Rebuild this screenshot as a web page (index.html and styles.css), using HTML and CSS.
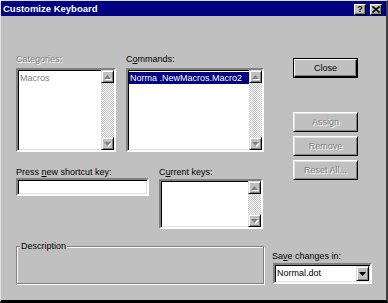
FILE: index.html
```html
<!DOCTYPE html>
<html lang="en">
<head>
    <meta charset="UTF-8">
    <title>Customize Keyboard</title>
    <link rel="stylesheet" href="styles.css">
</head>
<body>
    <div class="window">
        <div class="titlebar">
            <span class="title">Customize Keyboard</span>
            <div class="title-btns">
                <span class="tbtn tbtn-help">?</span>
                <span class="tbtn"><svg width="8" height="7" viewBox="0 0 8 7"><path d="M0.5 0.5 L7.5 6.5 M7.5 0.5 L0.5 6.5" stroke="#000" stroke-width="1.6"/></svg></span>
            </div>
        </div>
        <div class="body">
            <div class="top">
                <div class="fields">
                    <div class="row row-lists">
                        <div class="field f-cat">
                            <div class="label disabled">Categories:</div>
                            <div class="listbox lb-cat">
                                <div class="items"><div class="item disabled">Macros</div></div>
                                <div class="vscroll">
                                    <span class="arrow"><svg width="7" height="4" viewBox="0 0 7 4"><polygon points="3.5,0 7,4 0,4" fill="#808080"/></svg></span>
                                    <span class="track"></span>
                                    <span class="arrow"><svg width="7" height="4" viewBox="0 0 7 4"><polygon points="0,0 7,0 3.5,4" fill="#808080"/></svg></span>
                                </div>
                            </div>
                        </div>
                        <div class="field f-cmd">
                            <div class="label">C<u>o</u>mmands:</div>
                            <div class="listbox lb-cmd">
                                <div class="items"><div class="item selected">Norma .NewMacros.Macro2</div></div>
                                <div class="vscroll">
                                    <span class="arrow"><svg width="7" height="4" viewBox="0 0 7 4"><polygon points="3.5,0 7,4 0,4" fill="#808080"/></svg></span>
                                    <span class="track"></span>
                                    <span class="arrow"><svg width="7" height="4" viewBox="0 0 7 4"><polygon points="0,0 7,0 3.5,4" fill="#808080"/></svg></span>
                                </div>
                            </div>
                        </div>
                    </div>
                    <div class="row row-keys">
                        <div class="field f-short">
                            <div class="label">Press <u>n</u>ew shortcut key:</div>
                            <div class="textbox"></div>
                        </div>
                        <div class="field f-cur">
                            <div class="label">C<u>u</u>rrent keys:</div>
                            <div class="listbox lb-cur">
                                <div class="items"></div>
                                <div class="vscroll">
                                    <span class="arrow"><svg width="7" height="4" viewBox="0 0 7 4"><polygon points="3.5,0 7,4 0,4" fill="#808080"/></svg></span>
                                    <span class="track"></span>
                                    <span class="arrow"><svg width="7" height="4" viewBox="0 0 7 4"><polygon points="0,0 7,0 3.5,4" fill="#808080"/></svg></span>
                                </div>
                            </div>
                        </div>
                    </div>
                </div>
                <div class="buttons">
                    <div class="btn btn-default"><span>Close</span></div>
                    <div class="btn btn-assign disabled">Assi<u>g</u>n</div>
                    <div class="btn disabled">Remove</div>
                    <div class="btn disabled">Reset All...</div>
                </div>
            </div>
            <div class="bottom">
                <div class="groupbox"><span class="legend">Description</span></div>
                <div class="save">
                    <div class="label">Sa<u>v</u>e changes in:</div>
                    <div class="combo">
                        <span class="combo-text">Normal.dot</span>
                        <span class="combo-btn"><svg width="7" height="4" viewBox="0 0 7 4"><polygon points="0,0 7,0 3.5,4" fill="#000"/></svg></span>
                    </div>
                </div>
            </div>
        </div>
    </div>
</body>
</html>
```

FILE: styles.css
```css
/* Win95 style dialog */
* {
    box-sizing: border-box;
}
body {
    margin: 0;
    font-family: "Liberation Sans", Arial, sans-serif;
    font-size: 9px;
    background: #fff;
}
.window {
    width: 388px;
    height: 303px;
    background: #c0c0c0;
    border-top: 1px solid #dfdfdf;
    border-left: 1px solid #dfdfdf;
    border-right: 2px solid #404040;
    border-bottom: 3px solid #000;
    display: flex;
    flex-direction: column;
}
.titlebar {
    height: 15px;
    background: #000080;
    color: #fff;
    display: flex;
    align-items: center;
    justify-content: space-between;
    padding: 0 4px 0 2px;
}
.title {
    font-weight: bold;
    font-size: 9.5px;
}
.title-btns {
    display: flex;
    gap: 4px;
    padding-top: 2px;
}
.tbtn {
    width: 12px;
    height: 11px;
    background: #c0c0c0;
    border: 1px solid;
    border-color: #fff #000 #000 #fff;
    box-shadow: inset -1px -1px #808080;
    display: flex;
    align-items: center;
    justify-content: center;
    color: #000;
    font-weight: bold;
    font-size: 9px;
    line-height: 9px;
}
.body {
    padding: 37px 0 0 15px;
    flex: 1;
}
.top {
    display: flex;
}
.row {
    display: flex;
    gap: 10px;
}
.row-keys {
    margin-top: 14px;
}
.label {
    line-height: 12px;
    height: 12px;
    white-space: nowrap;
    color: #000;
}
.row-lists .label {
    margin-bottom: 3px;
}
.disabled {
    color: #808080;
    text-shadow: 1px 1px #fff;
}
.listbox {
    display: flex;
    background: #fff;
    border: 2px solid;
    border-color: #808080 #fff #fff #808080;
    box-shadow: inset 1px 1px #000, inset -1px -1px #dfdfdf;
    padding: 1px;
}
.lb-cat {
    width: 100px;
    height: 84px;
}
.lb-cmd {
    width: 138px;
    height: 84px;
}
.lb-cur {
    width: 104px;
    height: 50px;
    margin-top: 1px;
}
.items {
    flex: 1;
    padding-top: 1px;
}
.item {
    height: 12px;
    line-height: 12px;
    padding-left: 1px;
    white-space: nowrap;
}
.selected {
    background: #000080;
    color: #fff;
}
.vscroll {
    width: 13px;
    display: flex;
    flex-direction: column;
    margin: -1px -1px -1px 0;
}
.arrow {
    height: 13px;
    background: #c0c0c0;
    border: 1px solid;
    border-color: #dfdfdf #000 #000 #dfdfdf;
    box-shadow: inset 1px 1px #fff, inset -1px -1px #808080;
    display: flex;
    align-items: center;
    justify-content: center;
}
.arrow svg {
    filter: drop-shadow(1px 1px 0 #fff);
}
.track {
    flex: 1;
    background-image: conic-gradient(#fff 25%, #c0c0c0 0 50%, #fff 0 75%, #c0c0c0 0);
    background-size: 2px 2px;
}
.textbox {
    width: 133px;
    height: 18px;
    background: #fff;
    border: 2px solid;
    border-color: #808080 #fff #fff #808080;
    box-shadow: inset 1px 1px #000, inset -1px -1px #dfdfdf;
}
.buttons {
    margin-left: 29px;
    padding-top: 5px;
    display: flex;
    flex-direction: column;
    gap: 4px;
}
.btn {
    width: 65px;
    height: 20px;
    background: #c0c0c0;
    border: 1px solid;
    border-color: #fff #000 #000 #fff;
    box-shadow: inset 1px 1px #dfdfdf, inset -1px -1px #808080;
    display: flex;
    align-items: center;
    justify-content: center;
    white-space: nowrap;
}
.btn-default {
    border: 1px solid #000;
    box-shadow: none;
    padding: 0;
}
.btn-default span {
    width: 100%;
    height: 100%;
    display: flex;
    align-items: center;
    justify-content: center;
    border: 1px solid;
    border-color: #fff #000 #000 #fff;
    box-shadow: inset -1px -1px #808080;
}
.btn-assign {
    margin-top: 30px;
}
.bottom {
    display: flex;
    margin-top: 17px;
}
.groupbox {
    position: relative;
    width: 248px;
    height: 38px;
    border: 1px solid #808080;
    box-shadow: 1px 1px #fff, inset 1px 1px #fff;
}
.legend {
    position: absolute;
    top: -7px;
    left: 3px;
    padding: 0 1px;
    line-height: 12px;
    background: #c0c0c0;
}
.save {
    margin-left: 8px;
    padding-top: 4px;
}
.save .label {
    margin-bottom: 1px;
}
.combo {
    display: flex;
    width: 99px;
    height: 21px;
    margin-left: 1px;
    background: #fff;
    border: 2px solid;
    border-color: #808080 #fff #fff #808080;
    box-shadow: inset 1px 1px #000, inset -1px -1px #dfdfdf;
    padding: 1px;
}
.combo-text {
    flex: 1;
    line-height: 15px;
    padding-left: 1px;
}
.combo-btn {
    width: 13px;
    background: #c0c0c0;
    border: 1px solid;
    border-color: #dfdfdf #000 #000 #dfdfdf;
    box-shadow: inset 1px 1px #fff, inset -1px -1px #808080;
    display: flex;
    align-items: center;
    justify-content: center;
}
```
